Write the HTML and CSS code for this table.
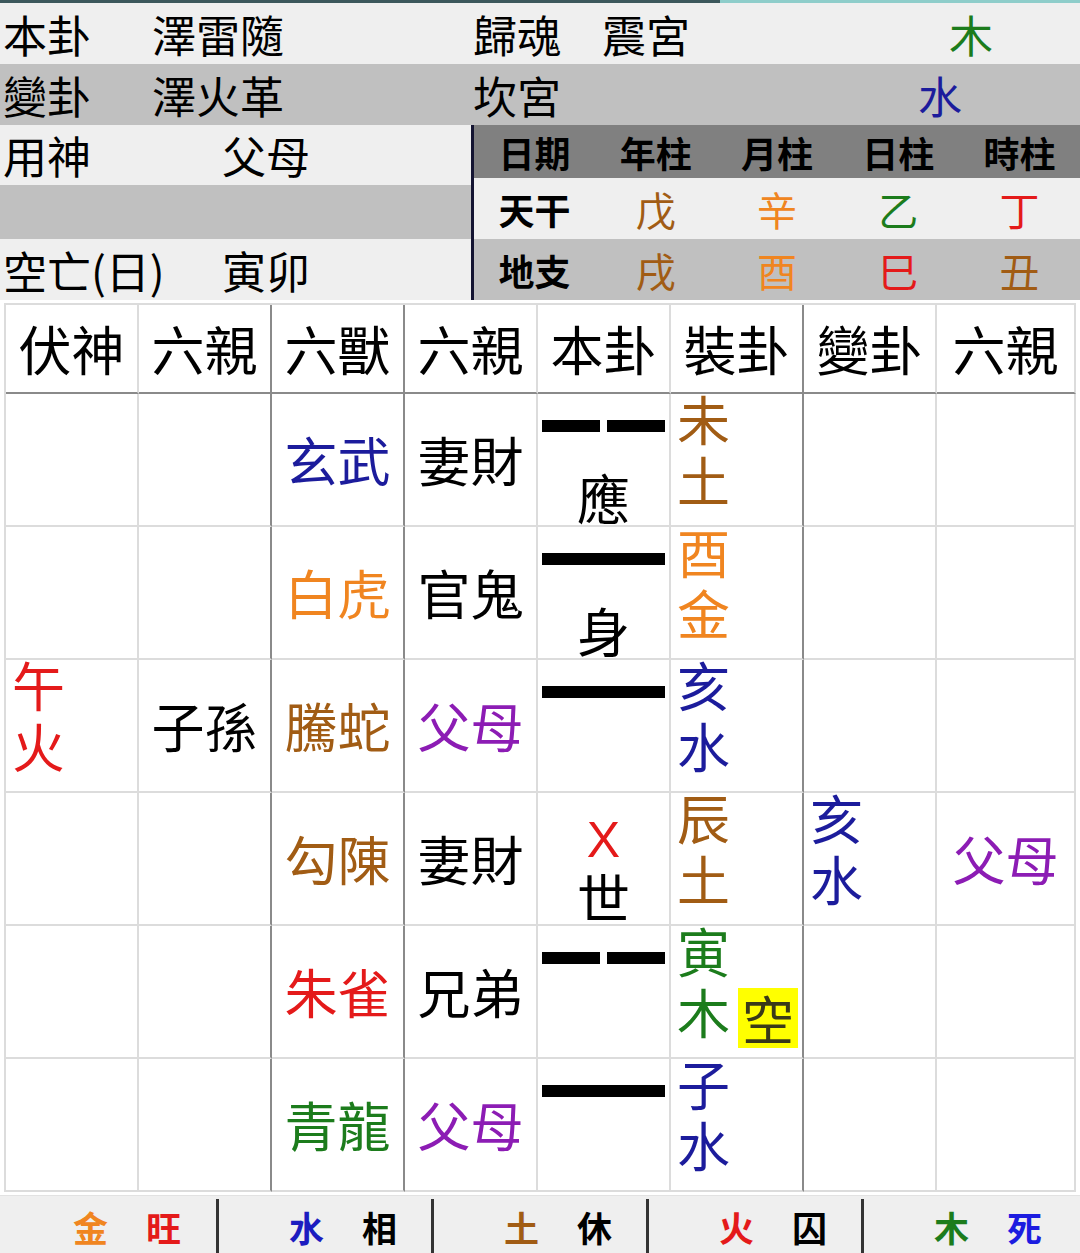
FILE: index.html
```html
<!DOCTYPE html>
<html lang="zh-Hant">
<head>
<meta charset="utf-8">
<title>六爻排盤</title>
<link rel="stylesheet" href="styles.css">
</head>
<body>
<div class="topbar"><div class="tb-dark"></div><div class="tb-light"></div></div>

<div class="info-row bg-light">
  <span class="w149">本卦</span><span class="w321">澤雷隨</span><span class="w129">歸魂</span><span class="w347">震宮</span><span class="green">木</span>
</div>
<div class="info-row bg-mid">
  <span class="w149">變卦</span><span class="w321">澤火革</span><span class="w445">坎宮</span><span class="navy">水</span>
</div>

<div class="split">
  <div class="left">
    <div class="lrow bg-light h60"><span class="w219">用神</span><span>父母</span></div>
    <div class="lrow bg-mid h54"></div>
    <div class="lrow bg-light h61"><span class="w219">空亡(日)</span><span>寅卯</span></div>
  </div>
  <div class="divider"></div>
  <div class="right">
    <div class="drow bg-dark head h53"><span>日期</span><span>年柱</span><span>月柱</span><span>日柱</span><span>時柱</span></div>
    <div class="drow bg-light h61"><span class="lbl">天干</span><span class="brown">戊</span><span class="orange">辛</span><span class="green">乙</span><span class="red">丁</span></div>
    <div class="drow bg-mid h61"><span class="lbl">地支</span><span class="brown">戌</span><span class="orange">酉</span><span class="red">巳</span><span class="brown">丑</span></div>
  </div>
</div>

<div class="chart">
  <div class="hd">伏神</div><div class="hd">六親</div><div class="hd">六獸</div><div class="hd">六親</div><div class="hd">本卦</div><div class="hd">裝卦</div><div class="hd">變卦</div><div class="hd">六親</div>

  <div class="cell"></div>
  <div class="cell"></div>
  <div class="cell ctr navy">玄武</div>
  <div class="cell ctr">妻財</div>
  <div class="cell yao"><div class="zone"><div class="yin"><i></i><i></i></div></div><div class="mark">應</div></div>
  <div class="cell stack brown"><div class="sx">未<br>土</div></div>
  <div class="cell"></div>
  <div class="cell"></div>

  <div class="cell"></div>
  <div class="cell"></div>
  <div class="cell ctr orange">白虎</div>
  <div class="cell ctr">官鬼</div>
  <div class="cell yao"><div class="zone"><div class="yang"></div></div><div class="mark">身</div></div>
  <div class="cell stack orange"><div class="sx">酉<br>金</div></div>
  <div class="cell"></div>
  <div class="cell"></div>

  <div class="cell stack red"><div class="sx">午<br>火</div></div>
  <div class="cell ctr">子孫</div>
  <div class="cell ctr brown">騰蛇</div>
  <div class="cell ctr purple">父母</div>
  <div class="cell yao"><div class="zone"><div class="yang"></div></div><div class="mark"></div></div>
  <div class="cell stack navy"><div class="sx">亥<br>水</div></div>
  <div class="cell"></div>
  <div class="cell"></div>

  <div class="cell"></div>
  <div class="cell"></div>
  <div class="cell ctr brown">勾陳</div>
  <div class="cell ctr">妻財</div>
  <div class="cell yao"><div class="zone"><span class="xmark">X</span></div><div class="mark">世</div></div>
  <div class="cell stack brown"><div class="sx">辰<br>土</div></div>
  <div class="cell stack navy"><div class="sx">亥<br>水</div></div>
  <div class="cell ctr purple">父母</div>

  <div class="cell"></div>
  <div class="cell"></div>
  <div class="cell ctr red">朱雀</div>
  <div class="cell ctr">兄弟</div>
  <div class="cell yao"><div class="zone"><div class="yin"><i></i><i></i></div></div><div class="mark"></div></div>
  <div class="cell stack green"><div class="sx">寅<br>木<span class="kong">空</span></div></div>
  <div class="cell"></div>
  <div class="cell"></div>

  <div class="cell"></div>
  <div class="cell"></div>
  <div class="cell ctr green">青龍</div>
  <div class="cell ctr purple">父母</div>
  <div class="cell yao"><div class="zone"><div class="yang"></div></div><div class="mark"></div></div>
  <div class="cell stack navy"><div class="sx">子<br>水</div></div>
  <div class="cell"></div>
  <div class="cell"></div>
</div>

<div class="bottombar">
  <div class="seg first"><span class="orange">金</span><span class="red">旺</span></div>
  <div class="seg"><span class="blue">水</span><span>相</span></div>
  <div class="seg"><span class="brown">土</span><span>休</span></div>
  <div class="seg"><span class="red">火</span><span>囚</span></div>
  <div class="seg"><span class="green">木</span><span class="blue2">死</span></div>
</div>
</body>
</html>
```

FILE: styles.css
```css
* { box-sizing: border-box; margin: 0; padding: 0; }

body {
  width: 1080px;
  height: 1253px;
  overflow: hidden;
  background: #ffffff;
  color: #000;
  font-family: "Noto Sans CJK TC", "Noto Sans CJK SC", sans-serif;
}

/* colours */
.brown { color: #a15c14; }
.orange { color: #f08520; }
.navy { color: #1c1c9c; }
.purple { color: #8c1cb4; }
.red { color: #e41a1a; }
.green { color: #1c7c1c; }
.blue { color: #1c1cc0; }
.blue2 { color: #1c1ce0; }

.bg-light { background: #efefef; }
.bg-mid { background: #c0c0c0; }
.bg-dark { background: #808080; }

/* top strip */
.topbar { display: flex; height: 3px; }
.tb-dark { width: 720px; background: #3c585c; }
.tb-light { flex: 1; background: #8ecdca; }

/* info rows */
.info-row {
  display: flex;
  align-items: center;
  height: 61px;
  padding-left: 3px;
  font-size: 44px;
  line-height: 1;
}
.w149 { width: 149px; flex: none; }
.w321 { width: 321px; flex: none; }
.w129 { width: 129px; flex: none; }
.w347 { width: 347px; flex: none; }
.w445 { width: 445px; flex: none; }
.w219 { width: 219px; flex: none; }

.split { display: flex; height: 175px; }
.left { width: 471px; display: flex; flex-direction: column; }
.lrow {
  display: flex;
  align-items: center;
  padding-left: 3px;
  font-size: 44px;
  line-height: 1;
}
.h60 { height: 60px; }
.h54 { height: 54px; }
.h61 { height: 61px; }
.h53 { height: 53px; }
.divider { width: 3px; background: #141432; }
.right { flex: 1; display: flex; flex-direction: column; }
.drow {
  display: grid;
  grid-template-columns: repeat(5, 1fr);
  align-items: center;
  font-size: 40px;
  line-height: 1;
}
.drow span { text-align: center; }
.drow.head { font-size: 36px; font-weight: 700; }
.drow .lbl { font-size: 36px; font-weight: 700; }

/* main chart */
.chart {
  margin: 3px 0 0 4px;
  width: 1072px;
  display: grid;
  grid-template-columns: repeat(7, 133px) 139px;
  grid-template-rows: 89px repeat(6, 133px);
  border-top: 2px solid #dcdcdc;
  border-left: 2px solid #dcdcdc;
  font-size: 53px;
}
.hd, .cell {
  border-right: 2px solid #dcdcdc;
  border-bottom: 2px solid #dcdcdc;
}
.hd {
  display: flex;
  align-items: center;
  justify-content: center;
  line-height: 1;
  border-bottom-color: #8a8a8a;
}
.chart > :nth-child(8n+2),
.chart > :nth-child(8n+3),
.chart > :nth-child(8n+6) { border-right-color: #8a8a8a; }

.ctr {
  display: flex;
  align-items: center;
  justify-content: center;
  line-height: 1;
}
.stack {
  padding-left: 6px;
  line-height: 61px;
}
.sx { margin-top: -6px; }
.yao {
  display: flex;
  flex-direction: column;
  align-items: center;
}
.zone { height: 78px; width: 123px; padding-top: 26px; }
.yang { width: 123px; height: 12px; background: #000; }
.yin { width: 123px; height: 12px; display: flex; justify-content: space-between; }
.yin i { display: block; width: 58px; height: 12px; background: #000; }
.xmark {
  display: block;
  text-align: center;
  color: #e41a1a;
  font-family: "Liberation Sans", sans-serif;
  font-size: 50px;
  line-height: 50px;
  margin-top: -4px;
}
.mark { font-size: 53px; line-height: 50px; }
.kong {
  display: inline-block;
  vertical-align: top;
  width: 60px;
  height: 60px;
  line-height: 60px;
  margin: 7px 0 0 8px;
  font-size: 52px;
  text-align: center;
  background: #ffff00;
  color: #3a3a18;
}

/* bottom bar */
.bottombar {
  margin-top: 3px;
  height: 58px;
  display: flex;
  background: #efefef;
  border-top: 1px solid #e2e2e2;
}
.seg {
  width: 215px;
  margin-top: 3px;
  display: flex;
  align-items: center;
  justify-content: center;
  gap: 38px;
  padding-left: 36px;
  border-left: 3px solid #333;
  font-size: 35px;
  font-weight: 700;
  line-height: 1;
}
.seg.first { width: 216px; border-left: none; padding-left: 38px; }
```
